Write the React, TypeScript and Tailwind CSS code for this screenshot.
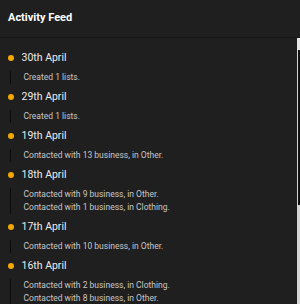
import React from 'react'

interface Entry {
    date: string
    lines: string[]
}

const feed: Entry[] = [
    { date: '30th April', lines: ['Created 1 lists.'] },
    { date: '29th April', lines: ['Created 1 lists.'] },
    { date: '19th April', lines: ['Contacted with 13 business, in Other.'] },
    { date: '18th April', lines: ['Contacted with 9 business, in Other.', 'Contacted with 1 business, in Clothing.'] },
    { date: '17th April', lines: ['Contacted with 10 business, in Other.'] },
    { date: '16th April', lines: ['Contacted with 2 business, in Clothing.', 'Contacted with 8 business, in Other.'] },
]

export default function App() {
    return (
        <div
            className="w-[300px] h-[304px] bg-[#1f1f1f] flex flex-col overflow-hidden"
            style={{ fontFamily: 'Roboto, "Noto Sans", sans-serif' }}
        >
            {/* Header */}
            <div className="h-[38px] shrink-0 flex items-center px-2 border-b border-[#171717]">
                <h2 className="text-[11px] font-bold text-white">Activity Feed</h2>
            </div>

            <div className="flex-1 flex min-h-0">
                {/* Feed list */}
                <div className="flex-1 overflow-hidden pt-[10px]">
                    {feed.map((item) => (
                        <div key={item.date}>
                            <div className="h-5 flex items-center pl-[7.5px] gap-[8px]">
                                <span className="w-[6px] h-[6px] rounded-full bg-[#f5a900] shrink-0" />
                                <span className="text-[10.5px] font-normal text-[#ebebeb]">{item.date}</span>
                            </div>
                            <div className="ml-[10px] mt-[3px] mb-[3px] border-l-[1.5px] border-[#0c0c0c] pl-[12.5px]">
                                {item.lines.map((line) => (
                                    <div key={line} className="text-[8.5px] leading-[13px] text-[#c8c8c8]">
                                        {line}
                                    </div>
                                ))}
                            </div>
                        </div>
                    ))}
                </div>

                {/* Scrollbar */}
                <div className="w-[3px] shrink-0 bg-[#d4d4d4] flex flex-col">
                    <div className="h-[12px] bg-[#e8e8e8]" />
                    <div className="h-[155px] bg-[#121212] border-l border-[#d4d4d4]" />
                </div>
            </div>
        </div>
    )
}
